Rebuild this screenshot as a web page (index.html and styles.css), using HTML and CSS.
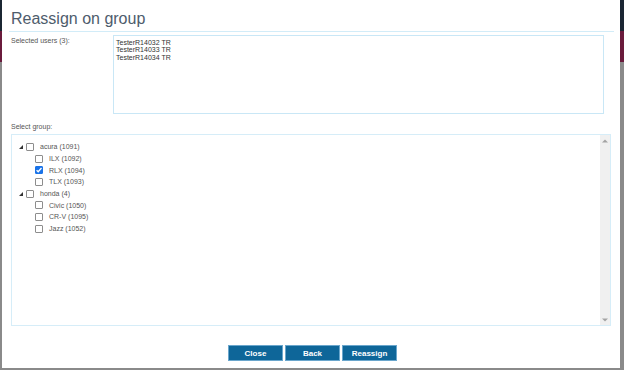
FILE: index.html
```html
<!DOCTYPE html>
<html>
<head>
<meta charset="utf-8">
<link rel="stylesheet" href="styles.css">
</head>
<body>
<div class="modal">
  <div class="header"><h1 class="title">Reassign on group</h1></div>
  <div class="users-row">
    <div class="label">Selected users (3):</div>
    <div class="users-box">TesterR14032 TR<br>TesterR14033 TR<br>TesterR14034 TR</div>
  </div>
  <div class="label group-label">Select group:</div>
  <div class="tree">
    <div class="tree-list">
      <div class="node root"><span class="tog"><svg width="4" height="4" viewBox="0 0 4 4"><polygon points="4,0 4,4 0,4" fill="#333"/></svg></span><span class="cb"></span><span class="txt">acura (1091)</span></div>
      <div class="node child"><span class="cb"></span><span class="txt">ILX (1092)</span></div>
      <div class="node child"><span class="cb checked"><svg width="8" height="8" viewBox="0 0 8 8"><path d="M1.6 4.2 L3.2 5.8 L6.5 2" stroke="#fff" stroke-width="1.3" fill="none"/></svg></span><span class="txt">RLX (1094)</span></div>
      <div class="node child"><span class="cb"></span><span class="txt">TLX (1093)</span></div>
      <div class="node root"><span class="tog"><svg width="4" height="4" viewBox="0 0 4 4"><polygon points="4,0 4,4 0,4" fill="#333"/></svg></span><span class="cb"></span><span class="txt">honda (4)</span></div>
      <div class="node child"><span class="cb"></span><span class="txt">Civic (1050)</span></div>
      <div class="node child"><span class="cb"></span><span class="txt">CR-V (1095)</span></div>
      <div class="node child"><span class="cb"></span><span class="txt">Jazz (1052)</span></div>
    </div>
    <div class="scrollbar">
      <svg class="arr" width="6" height="4" viewBox="0 0 6 4"><polygon points="3,0.5 6,3.5 0,3.5" fill="#a3a3a3"/></svg>
      <svg class="arr" width="6" height="4" viewBox="0 0 6 4"><polygon points="0,0.5 6,0.5 3,3.5" fill="#a3a3a3"/></svg>
    </div>
  </div>
  <div class="footer">
    <button class="btn">Close</button>
    <button class="btn">Back</button>
    <button class="btn">Reassign</button>
  </div>
</div>
</body>
</html>
```

FILE: styles.css
```css
html, body {
  margin: 0;
  padding: 0;
}
body {
  width: 624px;
  height: 370px;
  background: linear-gradient(to bottom, #1b2633 0 31px, #6a1b3c 31px 62px, #8a8a8a 62px);
  overflow: hidden;
}
.modal {
  box-sizing: border-box;
  margin: 0 4px 0 2px;
  width: 618px;
  height: 368px;
  background: #fff;
  font-family: "Liberation Sans", Arial, sans-serif;
  color: #444;
  display: flex;
  flex-direction: column;
}
.header {
  margin: 0 6px 0 7px;
  border-bottom: 1px solid #d2ecf8;
  height: 32px;
  box-sizing: border-box;
  padding: 10px 0 0 2px;
}
.title {
  margin: 0;
  font-size: 16px;
  font-weight: normal;
  line-height: 18px;
  color: #4e5c6c;
}
.users-row {
  display: flex;
  margin: 3px 0 0 9px;
}
.label {
  font-size: 7px;
  line-height: 9px;
  color: #555;
}
.users-row .label {
  width: 102px;
  padding-top: 1px;
}
.users-box {
  box-sizing: border-box;
  width: 491px;
  height: 79px;
  border: 1px solid #c9e7f6;
  padding: 3px 2px;
  font-size: 7px;
  line-height: 7.4px;
  color: #333;
}
.group-label {
  margin: 8px 0 0 9px;
}
.tree {
  box-sizing: border-box;
  margin: 3px 0 0 9px;
  width: 600px;
  height: 192px;
  border: 1px solid #d6edf8;
  display: flex;
  justify-content: space-between;
}
.tree-list {
  padding: 6px 0 0 6px;
}
.node {
  display: flex;
  align-items: center;
  height: 11.7px;
  font-size: 7px;
  color: #555;
}
.node.child {
  padding-left: 17px;
}
.tog {
  width: 7px;
  display: flex;
  align-items: center;
  margin-left: 1px;
  margin-top: 1px;
}
.cb {
  box-sizing: border-box;
  width: 8px;
  height: 8px;
  border: 1px solid #8d8d8d;
  border-radius: 1px;
  background: #fff;
  margin-right: 6px;
  display: flex;
}
.cb.checked {
  background: #1a73e8;
  border-color: #1a73e8;
}
.cb.checked svg {
  margin: -1px;
}
.scrollbar {
  width: 10px;
  background: #f0f0f0;
  display: flex;
  flex-direction: column;
  justify-content: space-between;
  align-items: center;
  padding: 4px 0 3px;
  box-sizing: border-box;
}
.footer {
  display: flex;
  justify-content: center;
  gap: 2px;
  margin-top: 19px;
  padding-left: 3px;
}
.btn {
  box-sizing: border-box;
  width: 55px;
  height: 16px;
  border: 1px solid #6aa6cc;
  background: #0e6699;
  color: #fff;
  font-family: "Liberation Sans", Arial, sans-serif;
  font-size: 8px;
  font-weight: bold;
  padding: 0;
  margin: 0;
}
```
